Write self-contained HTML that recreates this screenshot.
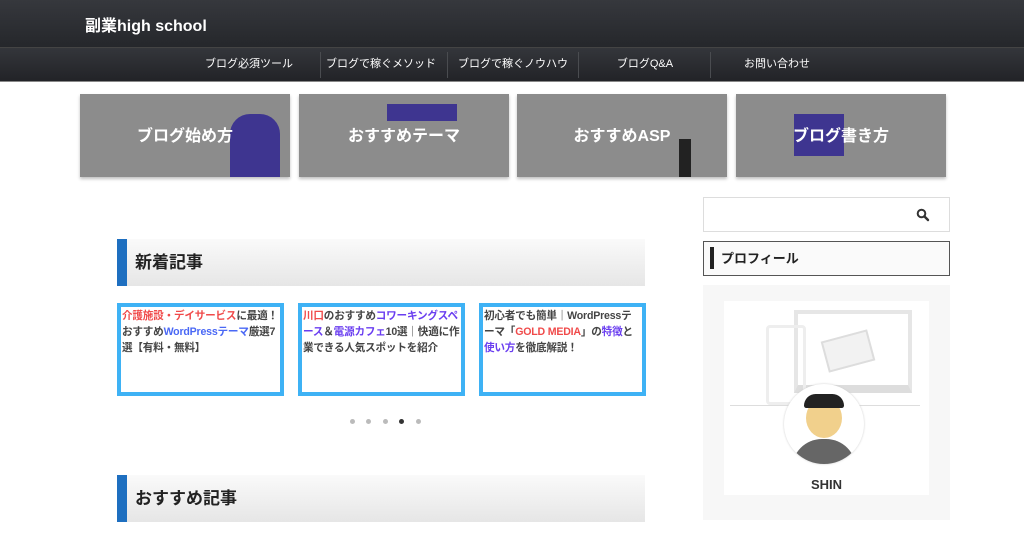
<!DOCTYPE html>
<html><head><meta charset="utf-8"><style>
*{margin:0;padding:0;box-sizing:border-box}
body{width:1024px;height:533px;overflow:hidden;background:#fff;font-family:"Liberation Sans","Noto Sans CJK JP",sans-serif;position:relative}
.a{position:absolute}
.hdr{left:0;top:0;width:1024px;height:47px;background:linear-gradient(#36383d,#25272b)}
.logo{left:85px;top:12px;color:#fff;font-size:16px;font-weight:bold}
.nav{left:0;top:47px;width:1024px;height:35px;background:linear-gradient(#34363b,#222327);border-top:1px solid #444;border-bottom:1px solid #888}
.ni{top:0;height:33px;line-height:33px;color:#fff;font-size:11px;text-align:center;width:132px}
.sep{top:4px;width:1px;height:26px;background:#4a4c50}
.tile{top:94px;width:210px;height:83px;background:#8c8c8c;box-shadow:0 2px 3px rgba(0,0,0,.25);color:#fff;font-size:16px;font-weight:bold;display:flex;align-items:center;justify-content:center;overflow:hidden}
.tile span{position:relative;top:-2px}
.h2{left:117px;width:528px;height:47px;background:linear-gradient(#fafafa,#e6e6e6);border-left:10px solid #1e6fc0;font-size:17px;font-weight:bold;color:#222;line-height:47px;padding-left:8px}
.card{top:303px;width:167px;height:93px;border:4px solid #3eb2f5;background:#fff;font-size:10.6px;font-weight:bold;color:#444;line-height:16px;padding:1px 1px;overflow:hidden;letter-spacing:-0.2px}
.r{color:#f04a4a}.p{color:#6a3ef0}.b{color:#4a68f5}
.dot{top:419px;width:5px;height:5px;border-radius:50%;background:#bbb}
</style></head><body>
<div class="a hdr"></div>
<div class="a logo">副業high school</div>
<div class="a nav">
<div class="a ni" style="left:183px">ブログ必須ツール</div>
<div class="a sep" style="left:320px"></div>
<div class="a ni" style="left:315px">ブログで稼ぐメソッド</div>
<div class="a sep" style="left:447px"></div>
<div class="a ni" style="left:447px">ブログで稼ぐノウハウ</div>
<div class="a sep" style="left:578px"></div>
<div class="a ni" style="left:579px">ブログQ&amp;A</div>
<div class="a sep" style="left:710px"></div>
<div class="a ni" style="left:711px">お問い合わせ</div>
</div>
<div class="a tile" style="left:80px"><div class="a" style="left:150px;top:20px;width:50px;height:63px;background:#3e3590;border-radius:20px 20px 0 0"></div><span>ブログ始め方</span></div>
<div class="a tile" style="left:299px"><div class="a" style="left:88px;top:10px;width:70px;height:17px;background:#3e3590"></div><span>おすすめテーマ</span></div>
<div class="a tile" style="left:517px"><div class="a" style="left:162px;top:45px;width:12px;height:38px;background:#222"></div><span>おすすめASP</span></div>
<div class="a tile" style="left:736px"><div class="a" style="left:58px;top:20px;width:50px;height:42px;background:#3e3590"></div><span>ブログ書き方</span></div>

<div class="a h2" style="top:239px">新着記事</div>
<div class="a card" style="left:117px"><span class="r">介護施設・デイサービス</span>に最適！おすすめ<span class="b">WordPressテーマ</span>厳選7選【有料・無料】</div>
<div class="a card" style="left:298px"><span class="r">川口</span>のおすすめ<span class="p">コワーキングスペース</span>＆<span class="p">電源カフェ</span>10選｜快適に作業できる人気スポットを紹介</div>
<div class="a card" style="left:479px">初心者でも簡単｜WordPressテーマ「<span class="r">GOLD MEDIA</span>」の<span class="p">特徴</span>と<span class="p">使い方</span>を徹底解説！</div>
<div class="a dot" style="left:350px"></div><div class="a dot" style="left:366px"></div><div class="a dot" style="left:383px"></div><div class="a dot" style="left:399px;background:#333"></div><div class="a dot" style="left:416px"></div>
<div class="a h2" style="top:475px">おすすめ記事</div>

<div class="a" style="left:703px;top:197px;width:247px;height:35px;border:1px solid #ddd"></div>
<svg class="a" style="left:916px;top:208px" width="14" height="14" viewBox="0 0 14 14"><circle cx="5.5" cy="5.5" r="3.8" fill="none" stroke="#333" stroke-width="2"/><path d="M8.5 8.5L12 12" stroke="#333" stroke-width="2.4" stroke-linecap="round"/></svg>
<div class="a" style="left:703px;top:241px;width:247px;height:35px;border:1px solid #555;background:#fafafa;font-size:13px;font-weight:bold;color:#222;line-height:33px;padding-left:17px">プロフィール</div>
<div class="a" style="left:710px;top:247px;width:4px;height:22px;background:#222"></div>
<div class="a" style="left:703px;top:285px;width:247px;height:235px;background:#f7f7f7"></div>
<div class="a" style="left:724px;top:301px;width:205px;height:194px;background:#fff"></div>
<div class="a" style="left:794px;top:310px;width:118px;height:83px;border:4px solid #e6e6e6;border-bottom:8px solid #ddd"></div>
<div class="a" style="left:766px;top:325px;width:40px;height:80px;border:3px solid #eee;border-radius:4px"></div>
<div class="a" style="left:824px;top:335px;width:48px;height:32px;background:#f2f2f2;border:2px solid #ddd;transform:rotate(-15deg)"></div>
<div class="a" style="left:730px;top:405px;width:190px;height:1px;background:#ddd"></div>
<div class="a" style="left:784px;top:384px;width:80px;height:80px;border-radius:50%;background:#fff;box-shadow:0 0 2px #ccc;overflow:hidden"><div class="a" style="left:22px;top:14px;width:36px;height:40px;border-radius:50%;background:#f1d08c"></div><div class="a" style="left:20px;top:10px;width:40px;height:14px;border-radius:20px 20px 4px 4px;background:#222"></div><div class="a" style="left:8px;top:55px;width:64px;height:30px;border-radius:30px 30px 0 0;background:#666"></div></div>
<div class="a" style="left:724px;top:477px;width:205px;text-align:center;font-size:13px;font-weight:bold;color:#333">SHIN</div>
</body></html>
